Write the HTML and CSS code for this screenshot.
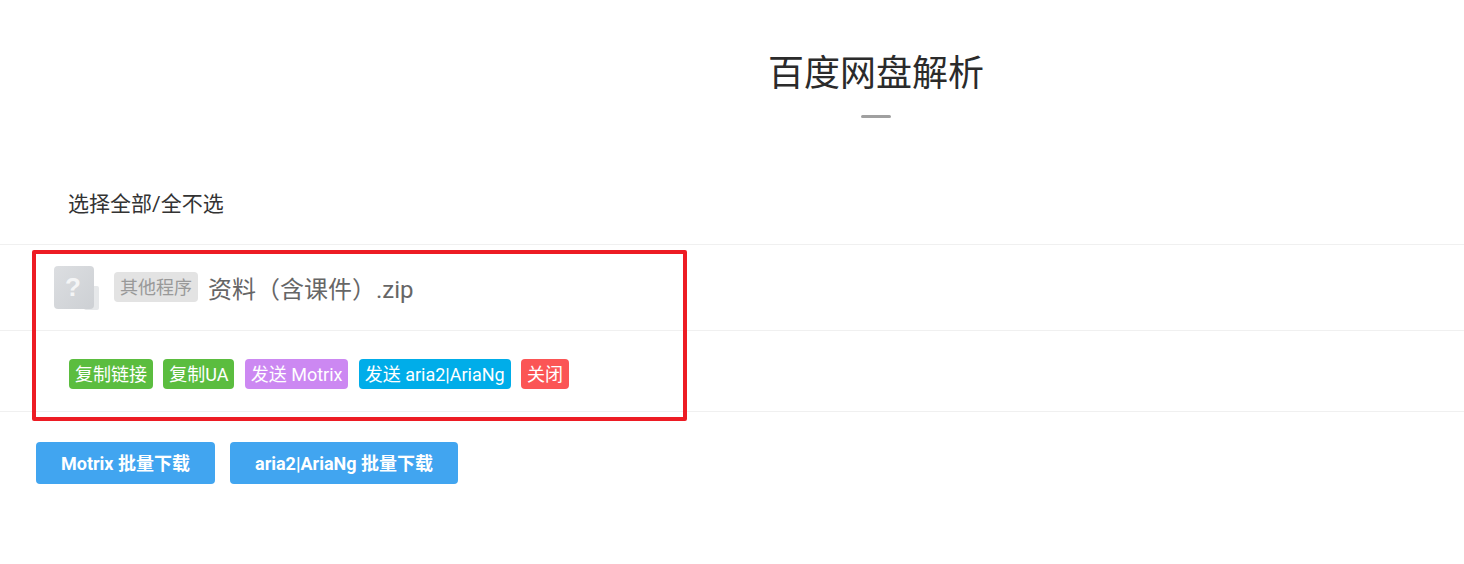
FILE: index.html
```html
<!DOCTYPE html>
<html lang="zh-CN">
<head>
<meta charset="UTF-8">
<meta name="viewport" content="width=device-width, initial-scale=1.0">
<title>百度网盘解析</title>
<link rel="stylesheet" href="styles.css">
</head>
<body>
<div class="popup">
    <h2 class="popup-title">百度网盘解析</h2>
    <div class="title-line"></div>

    <div class="select-all">选择全部/全不选</div>

    <div class="file-row">
        <svg class="file-icon" width="46" height="46" viewBox="0 0 46 46">
            <defs>
                <linearGradient id="iconFill" x1="0" y1="0" x2="1" y2="1">
                    <stop offset="0" stop-color="#dcdee1"/>
                    <stop offset="1" stop-color="#cdd0d4"/>
                </linearGradient>
            </defs>
            <rect x="30" y="20" width="15" height="24" rx="2" fill="#e6e8ea"/>
            <rect x="0" y="0" width="40" height="43" rx="4" fill="url(#iconFill)"/>
            <text x="19" y="30" text-anchor="middle" class="file-icon-mark">?</text>
        </svg>
        <span class="file-type">其他程序</span>
        <span class="file-name">资料（含课件）.zip</span>
    </div>

    <div class="action-row">
        <span class="tag tag-green">复制链接</span>
        <span class="tag tag-green">复制UA</span>
        <span class="tag tag-purple">发送 Motrix</span>
        <span class="tag tag-blue">发送 aria2|AriaNg</span>
        <span class="tag tag-red">关闭</span>
    </div>

    <div class="batch-row">
        <button type="button" class="batch-button">Motrix 批量下载</button>
        <button type="button" class="batch-button">aria2|AriaNg 批量下载</button>
    </div>
</div>

<!-- red annotation frame -->
<div class="highlight-box"></div>
</body>
</html>
```

FILE: styles.css
```css
html, body {
    margin: 0;
    height: 100%;
    overflow: hidden;
    background-color: #ffffff;
}

body {
    font-family: Roboto, "Noto Sans CJK SC", sans-serif;
    color: #333;
    position: relative;
}

/* the dialog is wider than the window, so its centre sits right of the middle */
.popup {
    width: 1752px;
    padding-top: 49px;
}

.popup-title {
    margin: 0;
    height: 50px;
    line-height: 50px;
    font-size: 36px;
    font-weight: 400;
    text-align: center;
    color: #2b2b2b;
}

.title-line {
    width: 30px;
    height: 3px;
    margin: 16px auto 0;
    background-color: #a0a0a0;
    border-radius: 2px;
}

.select-all {
    box-sizing: border-box;
    height: 127px;
    padding-left: 68px;
    line-height: 172px;
    font-size: 21px;
    color: #333;
    border-bottom: 1px solid #f0f0f0;
}

.file-row {
    display: flex;
    align-items: center;
    height: 85px;
    padding-left: 54px;
    border-bottom: 1px solid #f0f0f0;
}

.file-icon {
    flex: none;
    margin: 3px 14px 0 0;
}

.file-icon-mark {
    font-family: "Liberation Sans", sans-serif;
    font-size: 26px;
    font-weight: 700;
    fill: #f4f5f6;
}

.file-type {
    height: 30px;
    line-height: 31px;
    margin: -1px 10px 0 0;
    padding: 0 6px;
    font-size: 18px;
    color: #999;
    background-color: #e3e3e3;
    border-radius: 4px;
}

.file-name {
    font-size: 24px;
    color: #666;
}

.action-row {
    display: flex;
    align-items: center;
    gap: 10.25px;
    box-sizing: border-box;
    height: 81px;
    padding: 6px 0 0 69px;
    border-bottom: 1px solid #f0f0f0;
}

.tag {
    height: 30px;
    line-height: 32px;
    padding: 0 6px;
    font-size: 18px;
    color: #ffffff;
    border-radius: 4px;
}

.tag-green {
    background-color: #5bbd3f;
}

.tag-purple {
    background-color: #cc88f2;
}

.tag-blue {
    background-color: #00ade9;
}

.tag-red {
    background-color: #fb5555;
}

.batch-row {
    display: flex;
    gap: 15px;
    padding: 30px 0 0 36px;
}

.batch-button {
    height: 42px;
    padding: 0 25px 2px;
    font-family: inherit;
    font-size: 18px;
    font-weight: 700;
    color: #ffffff;
    background-color: #41a5f0;
    border: none;
    border-radius: 4px;
}

.highlight-box {
    position: absolute;
    left: 32px;
    top: 250px;
    width: 655px;
    height: 171px;
    box-sizing: border-box;
    border: 4px solid #ed1c24;
    border-radius: 2px;
}
```
